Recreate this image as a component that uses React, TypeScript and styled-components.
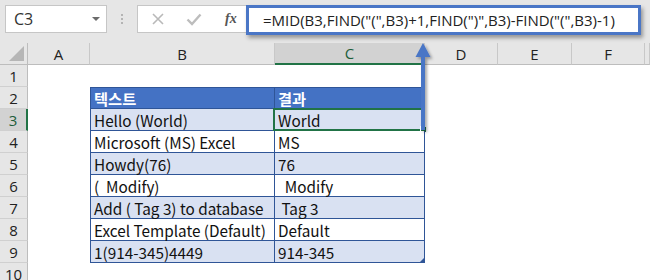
import React from 'react';
import styled, { createGlobalStyle } from 'styled-components';

const GlobalStyle = createGlobalStyle`
  html, body {
    margin: 0;
    padding: 0;
    background: #ffffff;
    overflow: hidden;
  }
`;

const uiFont = `"Open Sans", "Noto Sans", sans-serif`;
const cellFont = `"Noto Sans CJK KR", "Noto Sans", sans-serif`;

const Page = styled.div`
  width: 650px;
  height: 280px;
  position: relative;
  overflow: hidden;
  background: #ffffff;
`;

// ---- formula bar ----

const Toolbar = styled.div`
  height: 43px;
  box-sizing: border-box;
  background: #e6e6e6;
  display: flex;
  align-items: flex-start;
  padding: 5px 0 0 5px;
`;

const NameBox = styled.div`
  width: 102px;
  height: 28px;
  box-sizing: border-box;
  background: #fff;
  border: 1px solid #c6c6c6;
  display: flex;
  align-items: center;
  justify-content: space-between;
  padding: 0 6px 0 8px;
  font-family: ${uiFont};
  font-size: 16px;
  color: #333;
`;

const DropArrow = styled.span`
  width: 0;
  height: 0;
  border-left: 4px solid transparent;
  border-right: 4px solid transparent;
  border-top: 4px solid #6b6b6b;
`;

const Grip = styled.div`
  width: 30px;
  height: 28px;
  display: flex;
  flex-direction: column;
  align-items: center;
  justify-content: center;
  gap: 2px;
`;

const GripDot = styled.span`
  width: 2px;
  height: 2px;
  background: #b4b4b4;
`;

const FormulaButtons = styled.div`
  width: 109px;
  height: 28px;
  box-sizing: border-box;
  background: #fff;
  border: 1px solid #c6c6c6;
  border-right: none;
  display: flex;
  align-items: center;
  padding-left: 13px;
  gap: 21px;
`;

const FxLabel = styled.span`
  font-family: "Liberation Serif", serif;
  font-style: italic;
  font-weight: bold;
  font-size: 14px;
  color: #555;
  margin-left: 2px;
`;

const FormulaField = styled.div`
  width: 395px;
  height: 30px;
  box-sizing: border-box;
  background: #fff;
  border: 3px solid #4a76c6;
  box-shadow: 2px 3px 4px rgba(0, 0, 0, 0.35);
  display: flex;
  align-items: center;
  padding-left: 14px;
  font-family: ${uiFont};
  font-size: 15px;
  color: #222;
  white-space: nowrap;
  position: relative;
  z-index: 2;
`;

// ---- sheet ----

const Sheet = styled.div`
  display: grid;
  grid-template-columns: 28px 62px 185px 150px 73px 74px 73px 1fr;
  grid-auto-rows: 22px;
`;

const Corner = styled.div`
  background: #e6e6e6;
  border-right: 1px solid #bdbdbd;
  border-bottom: 1px solid #bdbdbd;
  box-sizing: border-box;
  position: relative;
  &::after {
    content: '';
    position: absolute;
    right: 3px;
    bottom: 3px;
    border-left: 15px solid transparent;
    border-bottom: 15px solid #b6b6b6;
  }
`;

const ColHead = styled.div<{ $active?: boolean }>`
  box-sizing: border-box;
  background: ${(p) => (p.$active ? '#d2d2d2' : '#e6e6e6')};
  border-right: 1px solid #c8c8c8;
  border-bottom: ${(p) => (p.$active ? '2px solid #217346' : '1px solid #bdbdbd')};
  display: flex;
  align-items: center;
  justify-content: center;
  font-family: ${uiFont};
  font-size: 15px;
  color: ${(p) => (p.$active ? '#1e5e3a' : '#222')};
`;

const RowHead = styled.div<{ $active?: boolean }>`
  box-sizing: border-box;
  background: ${(p) => (p.$active ? '#d2d2d2' : '#e6e6e6')};
  border-right: ${(p) => (p.$active ? '2px solid #217346' : '1px solid #bdbdbd')};
  border-bottom: 1px solid #d0d0d0;
  display: flex;
  align-items: center;
  justify-content: center;
  font-family: ${uiFont};
  font-size: 15px;
  color: ${(p) => (p.$active ? '#1e5e3a' : '#222')};
`;

const Blank = styled.div`
  background: #fff;
`;

type Tone = 'head' | 'band' | 'plain';

const Cell = styled.div<{ $tone: Tone; $first?: boolean; $top?: boolean }>`
  box-sizing: border-box;
  background: ${(p) => (p.$tone === 'head' ? '#4472c4' : p.$tone === 'band' ? '#d9e1f2' : '#ffffff')};
  color: ${(p) => (p.$tone === 'head' ? '#ffffff' : '#111')};
  font-weight: ${(p) => (p.$tone === 'head' ? 700 : 400)};
  border-right: 1px solid #2f5597;
  border-bottom: 1px solid #2f5597;
  border-left: ${(p) => (p.$first ? '1px solid #2f5597' : 'none')};
  border-top: ${(p) => (p.$top ? '1px solid #2f5597' : 'none')};
  display: flex;
  align-items: center;
  padding-left: 3px;
  font-family: ${cellFont};
  font-size: 15.3px;
  white-space: pre;
  overflow: visible;
  position: relative;
`;

const Selection = styled.div`
  position: absolute;
  inset: -1px -1px -1px -2px;
  border: 2px solid #217346;
  pointer-events: none;
  &::after {
    content: '';
    position: absolute;
    right: -4px;
    bottom: -4px;
    width: 5px;
    height: 5px;
    background: #217346;
    border: 1px solid #fff;
  }
`;

const ResizeMark = styled.span`
  position: absolute;
  right: 0;
  bottom: 0;
  border-left: 4px solid transparent;
  border-bottom: 4px solid #2f5597;
`;

const Pointer = styled.svg`
  position: absolute;
  left: 410px;
  top: 40px;
  z-index: 3;
  overflow: visible;
`;

// G is only a sliver at the right edge, so its letter is left off
const columns = ['A', 'B', 'C', 'D', 'E', 'F', ''];

const rows: [string, string][] = [
  ['텍스트', '결과'],
  ['Hello (World)', 'World'],
  ['Microsoft (MS) Excel', 'MS'],
  ['Howdy(76)', '76'],
  ['(  Modify)', '  Modify'],
  ['Add ( Tag 3) to database', ' Tag 3'],
  ['Excel Template (Default)', 'Default'],
  ['1(914-345)4449', '914-345'],
];

const formula = '=MID(B3,FIND("(",B3)+1,FIND(")",B3)-FIND("(",B3)-1)';

const App: React.FC = () => {
  const renderRow = (r: number) => {
    const data = r >= 2 && r <= 9 ? rows[r - 2] : null;
    const tone: Tone = r === 2 ? 'head' : r % 2 === 1 ? 'band' : 'plain';
    return (
      <React.Fragment key={r}>
        <RowHead $active={r === 3}>{r}</RowHead>
        <Blank />
        {data ? (
          <>
            <Cell $tone={tone} $first $top={r === 2}>
              {data[0]}
            </Cell>
            <Cell $tone={tone} $top={r === 2}>
              {data[1]}
              {r === 3 && <Selection />}
              {r === 9 && <ResizeMark />}
            </Cell>
          </>
        ) : (
          <>
            <Blank />
            <Blank />
          </>
        )}
        <Blank />
        <Blank />
        <Blank />
        <Blank />
      </React.Fragment>
    );
  };

  return (
    <Page>
      <GlobalStyle />
      <Toolbar>
        <NameBox>
          C3
          <DropArrow />
        </NameBox>
        <Grip>
          <GripDot />
          <GripDot />
          <GripDot />
        </Grip>
        <FormulaButtons>
          <svg width="14" height="14" viewBox="0 0 14 14">
            <path d="M2 2 L12 12 M12 2 L2 12" stroke="#b9b9b9" strokeWidth="1.6" />
          </svg>
          <svg width="16" height="14" viewBox="0 0 16 14">
            <path d="M1.5 7.5 L6 12 L14.5 2.5" stroke="#bdbdbd" strokeWidth="2.4" fill="none" />
          </svg>
          <FxLabel>fx</FxLabel>
        </FormulaButtons>
        <FormulaField>{formula}</FormulaField>
      </Toolbar>
      <Sheet>
        <Corner />
        {columns.map((c, i) => (
          <ColHead key={i} $active={c === 'C'}>
            {c}
          </ColHead>
        ))}
        {Array.from({ length: 10 }, (_, i) => renderRow(i + 1))}
      </Sheet>
      <Pointer width="24" height="92" viewBox="0 0 24 92">
        <defs>
          <filter id="drop" x="-50%" y="-20%" width="200%" height="140%">
            <feDropShadow dx="2" dy="2" stdDeviation="1.5" floodColor="#000" floodOpacity="0.35" />
          </filter>
        </defs>
        <g filter="url(#drop)">
          <rect x="11" y="14" width="4" height="76" fill="#4a76c6" />
          <path d="M13 3 L20.5 17 L5.5 17 Z" fill="#4a76c6" />
        </g>
      </Pointer>
    </Page>
  );
};

export default App;
